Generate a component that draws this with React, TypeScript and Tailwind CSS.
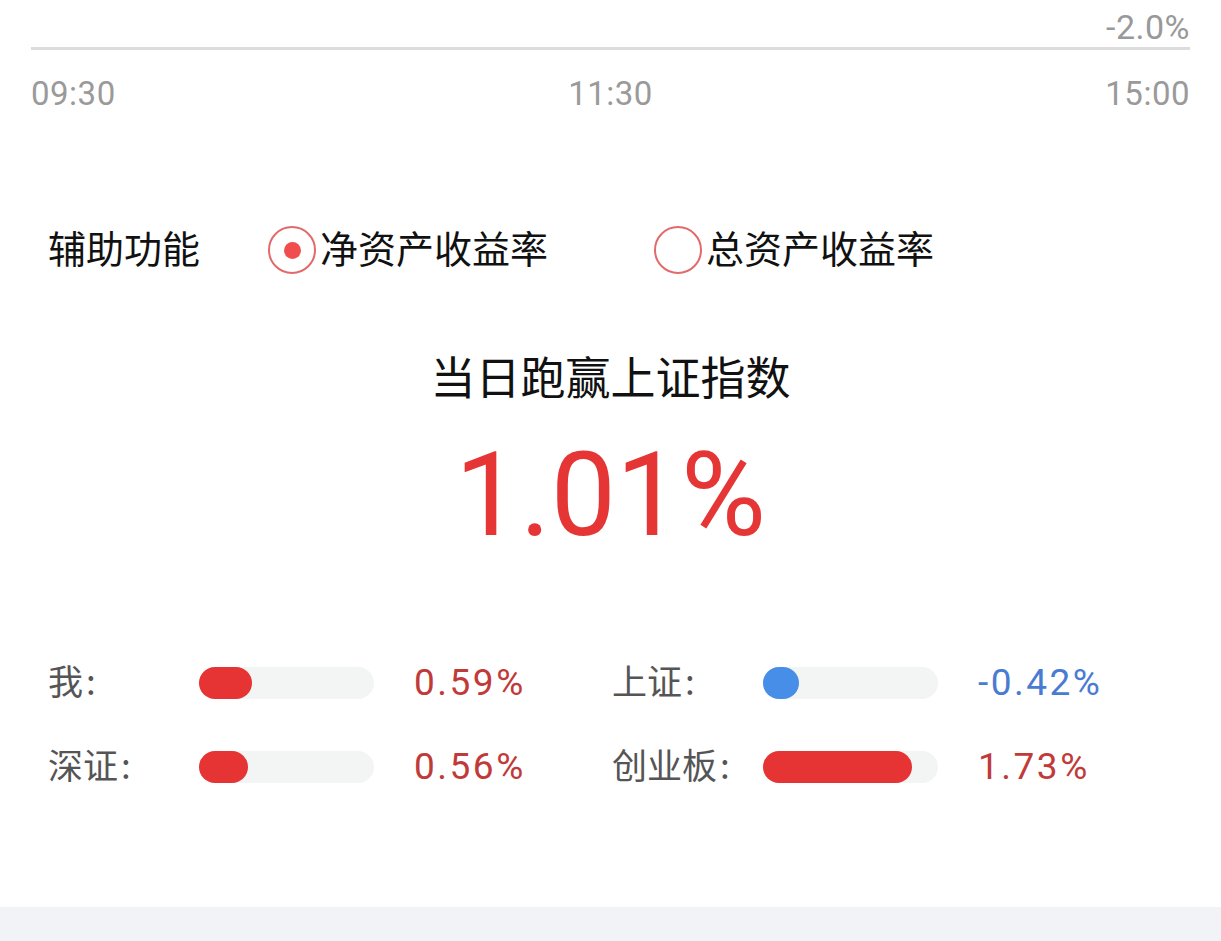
const stats = [
  { label: "我", pct: 30, value: "0.59%", tone: "red" },
  { label: "上证", pct: 0, value: "-0.42%", tone: "blue" },
  { label: "深证", pct: 28, value: "0.56%", tone: "red" },
  { label: "创业板", pct: 85, value: "1.73%", tone: "red" },
];

function Radio({ checked, label }: { checked: boolean; label: string }) {
  return (
    <div className="flex items-center">
      <span className="flex h-[48px] w-[48px] items-center justify-center rounded-full border-2 border-[#e26a6a]">
        {checked && <span className="h-[17px] w-[17px] rounded-full bg-[#f04e4e]" />}
      </span>
      <span className="mb-[8px] ml-[4px] text-[38px] text-[#111]">{label}</span>
    </div>
  );
}

function StatRow({ label, pct, value, tone }: { label: string; pct: number; value: string; tone: string }) {
  const blue = tone === "blue";
  return (
    <div className="flex h-[60px] items-center">
      <span className="mb-[6px] w-[151px] text-[35px] text-[#555]">
        {label}
        <span className="ml-[3px]">:</span>
      </span>
      <div className="h-[32px] w-[175px] rounded-full bg-[#f3f4f4]">
        <div
          className={blue ? "h-[32px] min-w-[36px] rounded-full bg-[#468ee8]" : "h-[32px] min-w-[36px] rounded-full bg-[#e63333]"}
          style={{ width: `${pct}%` }}
        />
      </div>
      <span
        className={
          blue
            ? "ml-[40px] font-['Roboto'] text-[37px] tracking-[2.5px] text-[#4a7bd2]"
            : "ml-[40px] font-['Roboto'] text-[37px] tracking-[2.5px] text-[#c13a3a]"
        }
      >
        {value}
      </span>
    </div>
  );
}

export default function App() {
  return (
    <div className="flex min-h-[941px] w-full flex-col bg-white font-['Noto_Sans_CJK_SC','Noto_Sans',sans-serif]">
      <div className="h-[47px] px-[31px] text-right">
        <div className="mt-[11px] font-['Roboto'] text-[34px] leading-[32px] tracking-[0.5px] text-[#999]">-2.0%</div>
      </div>
      <div className="mx-[31px] h-[3px] bg-[#dcdcdc]" />
      <div className="flex h-[88px] items-center justify-between px-[31px] font-['Roboto'] text-[33px] tracking-[0.5px] text-[#9a9a9a]">
        <span>09:30</span>
        <span>11:30</span>
        <span>15:00</span>
      </div>

      <div className="mt-[80px] flex h-[64px] items-center pl-[48px]">
        <span className="mb-[8px] w-[220px] text-[38px] text-[#111]">辅助功能</span>
        <div className="w-[386px]">
          <Radio checked label="净资产收益率" />
        </div>
        <Radio checked={false} label="总资产收益率" />
      </div>

      <div className="mt-[66px] flex h-[60px] items-center justify-center text-[45px] text-[#111]">
        <span className="mb-[4px]">当日跑赢上证指数</span>
      </div>
      <div className="mt-[22px] flex h-[130px] items-center justify-center font-['Roboto'] text-[116px] text-[#e53535]">
        1.01%
      </div>

      <div className="mt-[93px] grid grid-cols-[564px_1fr] gap-y-[24px] pl-[48px]">
        {stats.map((s) => (
          <StatRow key={s.label} {...s} />
        ))}
      </div>

      <div className="mt-[110px] flex-1 bg-[#f2f3f7]" />
    </div>
  );
}
